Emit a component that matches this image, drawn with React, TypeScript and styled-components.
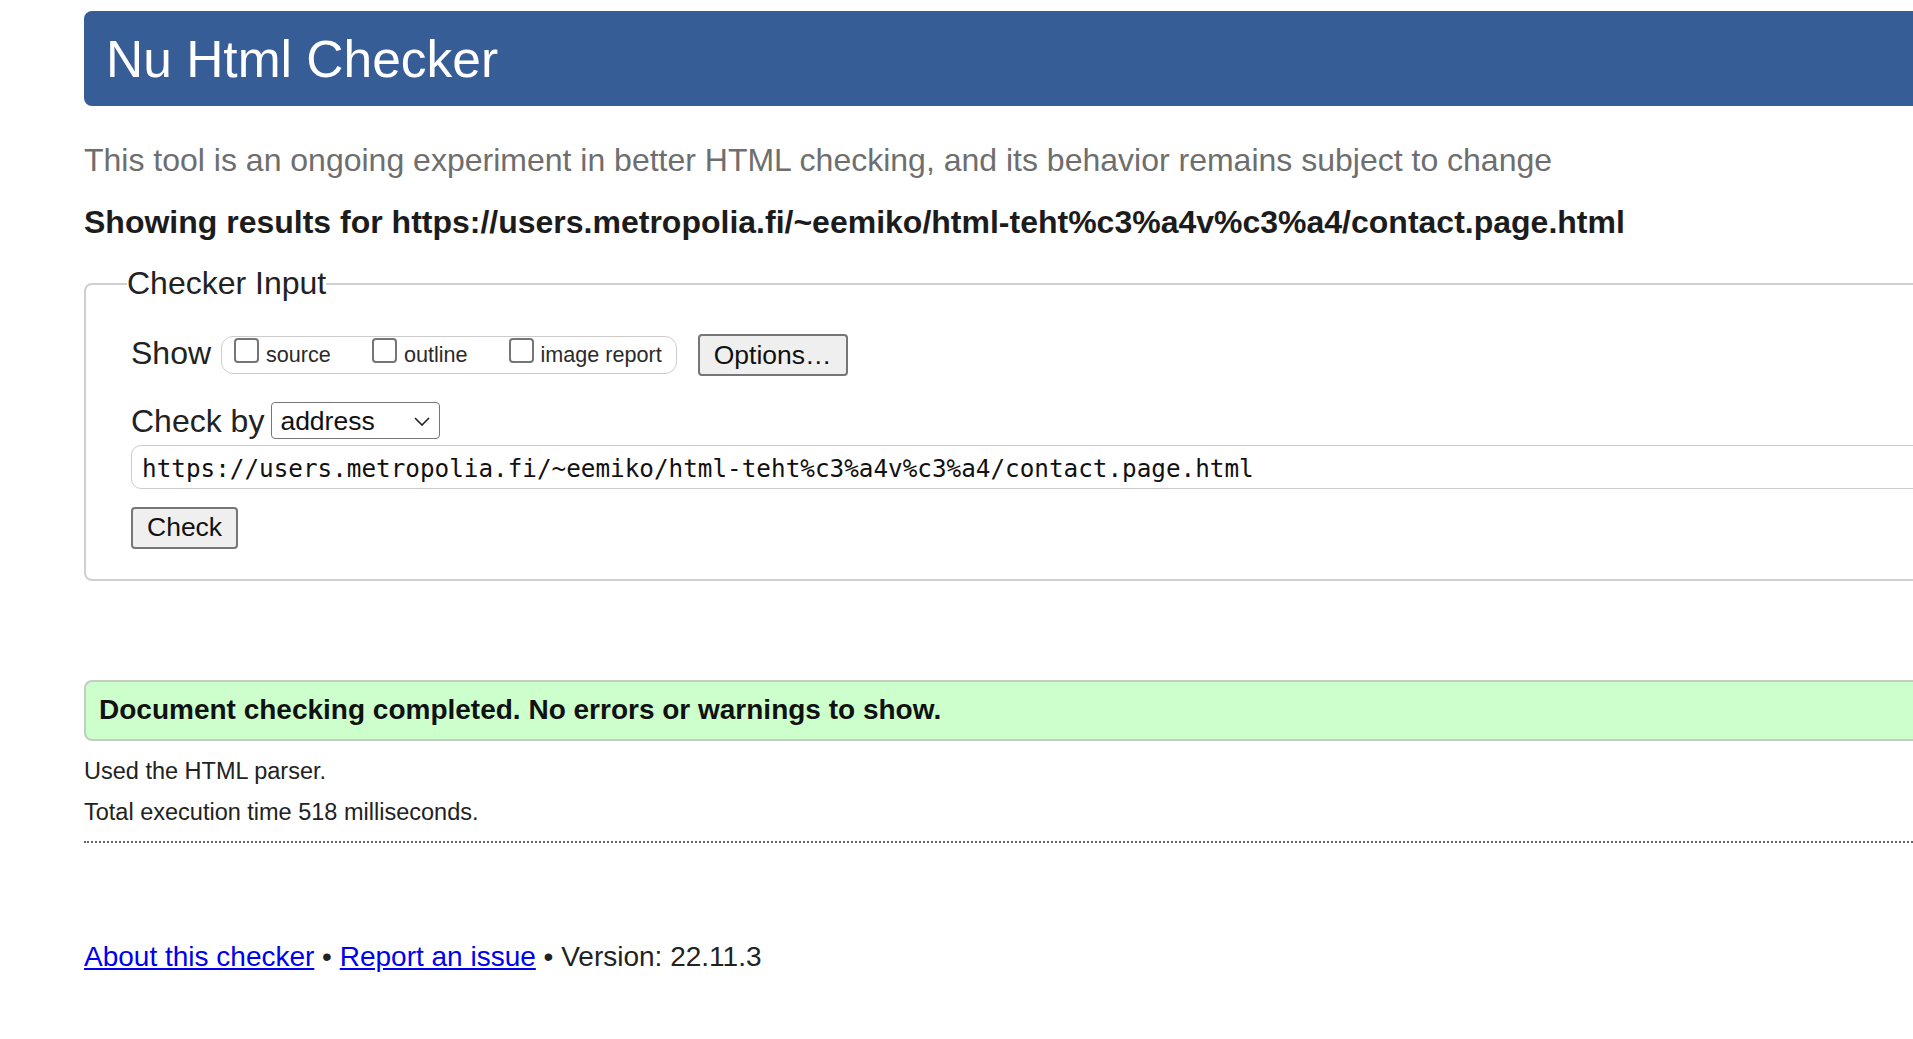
import React from "react";
import styled, { createGlobalStyle } from "styled-components";

const GlobalStyle = createGlobalStyle`
  html, body {
    margin: 0;
    padding: 0;
    background: #ffffff;
    overflow: hidden;
  }
  body {
    font-family: "Liberation Sans", Arial, sans-serif;
    color: #222222;
  }
`;

const Page = styled.main`
  display: flex;
  flex-direction: column;
  width: 2300px;
  box-sizing: border-box;
  padding: 11px 0 40px 84px;
`;

const Header = styled.h1`
  margin: 0;
  background: #365d95;
  color: #ffffff;
  font-size: 51.5px;
  font-weight: 400;
  line-height: 59px;
  padding: 19px 22px 17px;
  border-radius: 8px;
`;

const Tagline = styled.p`
  margin: 36px 0 0;
  font-size: 32px;
  line-height: 37px;
  color: #6e6e6e;
  white-space: nowrap;
`;

const ResultsFor = styled.h2`
  margin: 25px 0 0;
  font-size: 32px;
  font-weight: 700;
  line-height: 37px;
  color: #1c1c1c;
  white-space: nowrap;
`;

const InputFieldset = styled.fieldset`
  margin: 24px 0 0;
  border: 2px solid #cfcfcf;
  border-radius: 8px;
  padding: 31px 0 30px 45px;
  min-inline-size: 0;
`;

const Legend = styled.legend`
  margin-left: -4px;
  padding: 0;
  font-size: 32px;
  line-height: 37px;
  color: #222222;
`;

const Row = styled.div<{ $gapTop?: number }>`
  display: flex;
  align-items: flex-start;
  margin-top: ${(p) => p.$gapTop ?? 0}px;
`;

const RowLabel = styled.span<{ $gapRight: number; $drop: number }>`
  font-size: 32px;
  line-height: 37px;
  color: #222222;
  margin: ${(p) => p.$drop}px ${(p) => p.$gapRight}px 0 0;
  white-space: nowrap;
`;

const ShowGroup = styled.div`
  display: flex;
  align-items: flex-start;
  margin-top: 3px;
  padding: 0 14px 1px 12px;
  border: 1.5px solid #cccccc;
  border-radius: 12px;
`;

const ShowOption = styled.label<{ $last?: boolean }>`
  display: flex;
  align-items: flex-start;
  gap: 7px;
  margin-right: ${(p) => (p.$last ? 0 : 41)}px;
`;

const Box = styled.input`
  appearance: none;
  margin: 1px 0 0;
  width: 25px;
  height: 25px;
  box-sizing: border-box;
  border: 2px solid #767676;
  border-radius: 4px;
  background: #ffffff;
`;

const OptionText = styled.span`
  font-size: 21.6px;
  line-height: 35px;
  color: #2a2a2a;
  white-space: nowrap;
`;

const Button = styled.button<{ $top?: number; $left?: number }>`
  margin: ${(p) => p.$top ?? 0}px 0 0 ${(p) => p.$left ?? 0}px;
  height: 42px;
  padding: 0 14px;
  box-sizing: border-box;
  border: 2px solid #767676;
  border-radius: 4px;
  background: #efefef;
  font-family: "Liberation Sans", Arial, sans-serif;
  font-size: 26.5px;
  color: #111111;
  white-space: nowrap;
`;

const SelectWrap = styled.span`
  position: relative;
  display: inline-flex;
  margin-top: 3px;
`;

const Select = styled.select`
  appearance: none;
  width: 169px;
  height: 37px;
  box-sizing: border-box;
  border: 1.5px solid #767676;
  border-radius: 4px;
  background: #ffffff;
  padding: 0 0 0 8px;
  font-family: "Liberation Sans", Arial, sans-serif;
  font-size: 26.5px;
  color: #111111;
`;

const Chevron = styled.svg`
  position: absolute;
  right: 10px;
  top: 15px;
  pointer-events: none;
`;

const UrlInput = styled.input`
  margin-top: 4.5px;
  width: 2000px;
  height: 44px;
  box-sizing: border-box;
  border: 1.5px solid #cccccc;
  border-radius: 10px;
  padding: 4px 10px 0;
  font-family: "DejaVu Sans Mono", "Liberation Mono", monospace;
  font-size: 24.3px;
  color: #111111;
  background: #ffffff;
`;

const SuccessBar = styled.p`
  margin: 99.5px 0 0;
  background: #ccffcc;
  border: 2px solid #c4ccc4;
  border-radius: 8px;
  padding: 11.5px 13px 13px;
  font-size: 28px;
  font-weight: 700;
  line-height: 32px;
  color: #111111;
  white-space: nowrap;
`;

const Note = styled.p<{ $top: number }>`
  margin: ${(p) => p.$top}px 0 0;
  font-size: 23.5px;
  line-height: 27px;
  color: #222222;
  white-space: nowrap;
`;

const Divider = styled.div`
  margin-top: 15px;
  border-top: 2px dotted #666666;
`;

const Footer = styled.p`
  margin: 98px 0 0;
  font-size: 28px;
  line-height: 32px;
  color: #222222;
  white-space: nowrap;
`;

const FooterLink = styled.a`
  color: #0000ee;
  text-decoration: underline;
`;

const url =
  "https://users.metropolia.fi/~eemiko/html-teht%c3%a4v%c3%a4/contact.page.html";

export default function App() {
  return (
    <>
      <GlobalStyle />
      <Page>
        <Header>Nu Html Checker</Header>
        <Tagline>
          This tool is an ongoing experiment in better HTML checking, and its
          behavior remains subject to change
        </Tagline>
        <ResultsFor>Showing results for {url}</ResultsFor>
        <InputFieldset>
          <Legend>Checker Input</Legend>
          <Row>
            <RowLabel $gapRight={10} $drop={2}>
              Show
            </RowLabel>
            <ShowGroup>
              <ShowOption>
                <Box type="checkbox" />
                <OptionText>source</OptionText>
              </ShowOption>
              <ShowOption>
                <Box type="checkbox" />
                <OptionText>outline</OptionText>
              </ShowOption>
              <ShowOption $last>
                <Box type="checkbox" />
                <OptionText>image report</OptionText>
              </ShowOption>
            </ShowGroup>
            <Button type="button" $top={1} $left={21}>
              Options…
            </Button>
          </Row>
          <Row $gapTop={23}>
            <RowLabel $gapRight={7} $drop={4}>
              Check by
            </RowLabel>
            <SelectWrap>
              <Select defaultValue="address">
                <option value="address">address</option>
                <option value="file">file upload</option>
                <option value="text">text input</option>
              </Select>
              <Chevron width="16" height="9" viewBox="0 0 16 9">
                <polyline
                  points="1,1 8,8 15,1"
                  fill="none"
                  stroke="#222"
                  strokeWidth="1.6"
                />
              </Chevron>
            </SelectWrap>
          </Row>
          <Row>
            <UrlInput type="url" defaultValue={url} />
          </Row>
          <Row>
            <Button type="submit" $top={18}>
              Check
            </Button>
          </Row>
        </InputFieldset>
        <SuccessBar>
          Document checking completed. No errors or warnings to show.
        </SuccessBar>
        <Note $top={17}>Used the HTML parser.</Note>
        <Note $top={14}>Total execution time 518 milliseconds.</Note>
        <Divider />
        <Footer>
          <FooterLink href="#about">About this checker</FooterLink> •{" "}
          <FooterLink href="#issue">Report an issue</FooterLink> • Version:
          22.11.3
        </Footer>
      </Page>
    </>
  );
}
